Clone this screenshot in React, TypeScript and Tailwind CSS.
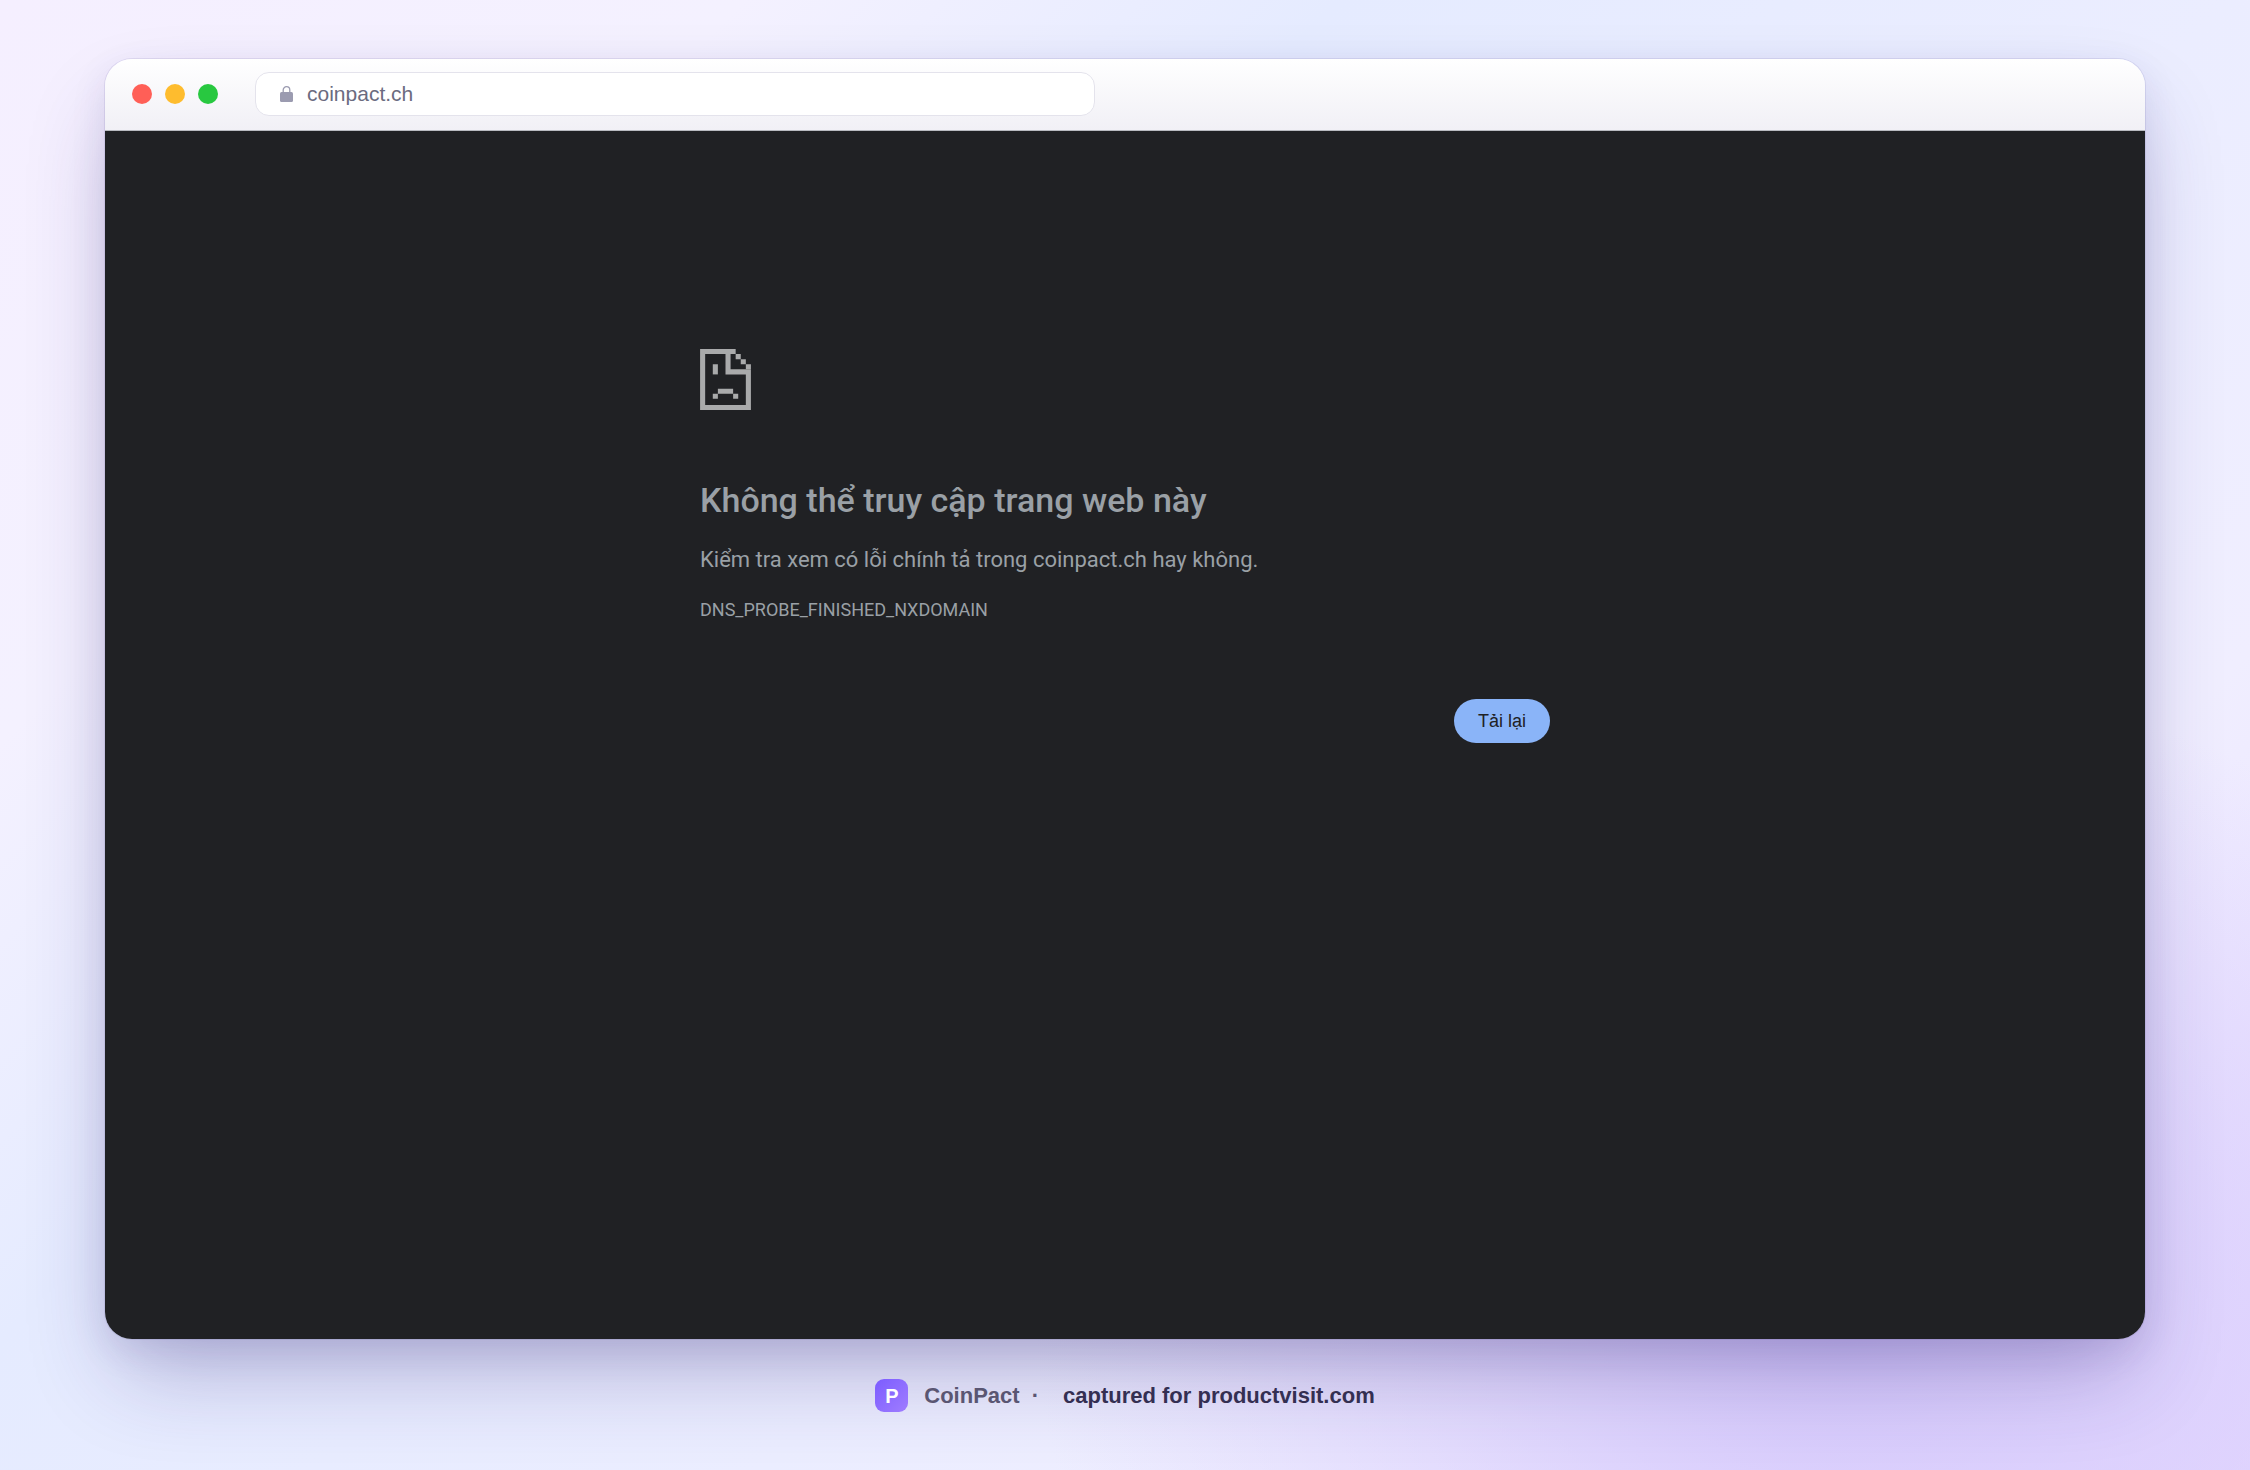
function TrafficLights() {
  return (
    <div className="flex gap-[13px]">
      <span className="size-5 rounded-full bg-[#ff5f57]" />
      <span className="size-5 rounded-full bg-[#febc2e]" />
      <span className="size-5 rounded-full bg-[#28c840]" />
    </div>
  );
}

function LockIcon() {
  return (
    <svg viewBox="0 0 13 16" className="h-4 w-[13px] shrink-0" aria-hidden="true">
      <rect x="0" y="6" width="13" height="10" rx="1.5" fill="#9b9bb0" />
      <path d="M3.2 6.5V4a3.3 3.3 0 0 1 6.6 0v2.5" fill="none" stroke="#9b9bb0" strokeWidth="1.3" />
    </svg>
  );
}

function SadPageIcon() {
  return (
    <svg
      viewBox="0 0 100 120"
      className="h-[61px] w-[51px]"
      fill="#a9aaab"
      aria-hidden="true"
    >
      <path d="M0 0H70V10H60V40H100V120H0ZM10 10V110H90V50H50V10Z" fillRule="evenodd" />
      <path d="M70 10h10v10h-10zM80 20h10v10h-10zM90 30h10v10h-10z" />
      <path d="M25 30h10v20h-10z" />
      <path d="M35 78h30v10h-30zM25 88h10v10h-10zM65 88h10v10h-10z" />
    </svg>
  );
}

function TitleBar() {
  return (
    <header className="flex h-[72px] items-center border-b border-[#b9bbc0] bg-linear-to-b from-white to-[#f1f0f6] px-[27px] pb-px">
      <TrafficLights />
      <label className="ml-[37px] flex h-11 w-[840px] items-center gap-[14px] rounded-[14px] border border-[#e4e3ec] bg-white px-6">
        <LockIcon />
        <input
          type="text"
          aria-label="Address"
          defaultValue="coinpact.ch"
          className="min-w-0 flex-1 bg-transparent text-[21px] leading-7 text-[#6b6b80] outline-none"
        />
      </label>
    </header>
  );
}

function ErrorPage() {
  return (
    <section className="flex-1 bg-[#202124] pt-[218px] font-['Roboto','Noto_Sans',sans-serif] text-[#9aa0a6]">
      <div className="mx-auto w-[850px] max-w-full">
        <SadPageIcon />
        <h1 className="mt-[68px] text-[34px] leading-[44px] font-medium">
          Không thể truy cập trang web này
        </h1>
        <p className="mt-[22px] text-[22px] leading-8">
          Kiểm tra xem có lỗi chính tả trong coinpact.ch hay không.
        </p>
        <p className="mt-5 text-[18px] leading-7">DNS_PROBE_FINISHED_NXDOMAIN</p>
        <div className="mt-[75px] flex justify-end">
          <button
            type="button"
            className="h-11 rounded-full bg-[#8ab4f8] px-6 font-['Liberation_Sans',sans-serif] text-[18px] text-[#202124]"
          >
            Tải lại
          </button>
        </div>
      </div>
    </section>
  );
}

export default function App() {
  return (
    <main className="flex min-h-screen flex-col bg-[radial-gradient(36%_44%_at_82%_90%,#d5c8fc_0%,transparent_100%),linear-gradient(135deg,#f5efff_0%,#f4f1ff_20%,#e5ebff_36%,#ebedff_60%,#f0eeff_78%,#e7dcff_100%)] px-[105px] pt-[59px] font-['Liberation_Sans',sans-serif]">
      <div className="flex flex-1 flex-col overflow-hidden rounded-[27px] shadow-[0_0_0_1px_rgba(90,80,160,0.12),0_45px_90px_-15px_rgba(50,35,120,0.3),0_12px_36px_rgba(50,35,120,0.1)]">
        <TitleBar />
        <ErrorPage />
      </div>
      <footer className="flex h-[131px] items-center justify-center pb-[18px] text-[22px] leading-8 font-bold">
        <span className="flex size-[33px] items-center justify-center rounded-[9px] bg-linear-to-br from-[#7c5cff] to-[#a07cff] text-[20px] text-white">
          P
        </span>
        <span className="ml-4 text-[#5a5672]">CoinPact</span>
        <span className="ml-3 text-[#5a5672]">·</span>
        <span className="ml-6 text-[#342f52]">captured for productvisit.com</span>
      </footer>
    </main>
  );
}
